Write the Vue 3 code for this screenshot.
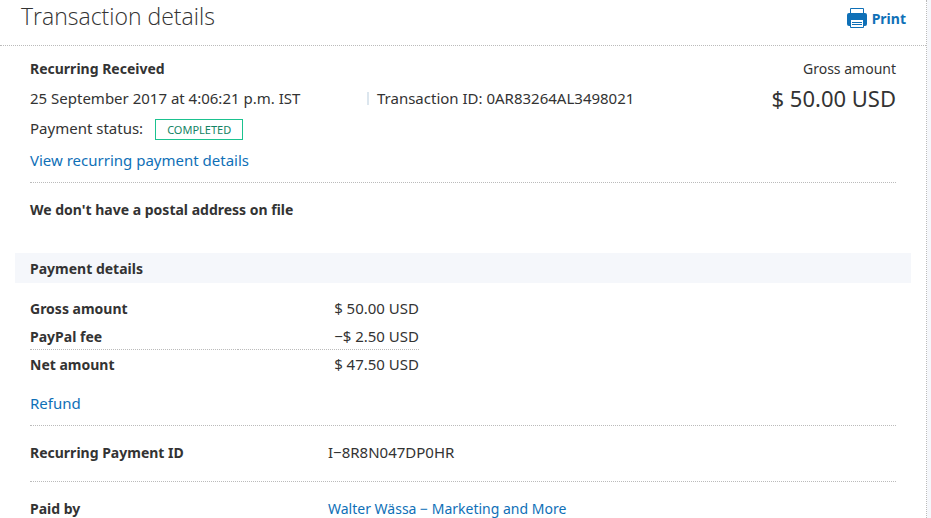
<script setup>
const amounts = [
  { label: 'Gross amount', value: '$ 50.00 USD' },
  { label: 'PayPal fee', value: '−$ 2.50 USD', last: true },
  { label: 'Net amount', value: '$ 47.50 USD', total: true },
]
</script>

<template>
  <div class="page">
    <main class="panel">
      <header class="header">
        <h1>Transaction details</h1>
        <button type="button" class="print">
          <svg viewBox="0 0 20 20" width="20" height="20" aria-hidden="true">
            <path d="M3.500 6V.5h13V6" fill="#fff" stroke="#0f70b7" stroke-linejoin="round" />
            <path d="M2 5h16q2 0 2 2v9q0 2-2 2h-1v-6H3v6H2q-2 0-2-2V7q0-2 2-2z" fill="#0f70b7" />
            <path d="M3.500 12v7.500h13V12" fill="#fff" stroke="#0f70b7" stroke-linejoin="round" />
            <path d="M5 14.500h10M5 16.500h10" stroke="#0f70b7" />
          </svg>
          <span>Print</span>
        </button>
      </header>

      <section class="summary">
        <div class="facts">
          <h2>Recurring Received</h2>
          <div class="when">
            <span class="date">25 September 2017 at 4:06:21 p.m. IST</span>
            <span class="txn">Transaction ID: 0AR83264AL3498021</span>
          </div>
          <div class="status">
            <span class="status-label">Payment status:</span>
            <span class="badge">COMPLETED</span>
          </div>
          <a href="#recurring" class="more">View recurring payment details</a>
        </div>
        <div class="gross">
          <span>Gross amount</span>
          <strong>$ 50.00 USD</strong>
        </div>
      </section>

      <p class="postal">We don't have a postal address on file</p>

      <h2 class="band">Payment details</h2>

      <section class="payment">
        <table>
          <tbody>
            <tr v-for="row in amounts" :key="row.label" :class="{ last: row.last, total: row.total }">
              <th scope="row">{{ row.label }}</th>
              <td>{{ row.value }}</td>
            </tr>
          </tbody>
        </table>
        <a href="#refund" class="refund">Refund</a>
      </section>

      <dl class="details">
        <div class="detail">
          <dt>Recurring Payment ID</dt>
          <dd>I−8R8N047DP0HR</dd>
        </div>
        <div class="detail">
          <dt>Paid by</dt>
          <dd><a href="#payer" class="payer">Walter Wässa − Marketing and More</a></dd>
        </div>
      </dl>
    </main>
  </div>
</template>

<style>
body {
  background: #f5f7fb;
}
</style>

<style scoped>
.page {
  padding-right: 4px;
  color: #333;
  font: 15px/16px "Noto Sans", "Open Sans", sans-serif;
}
.panel {
  background: #fff;
  border-right: 1px dotted #bbb;
}
h1, h2, p, dl, dd {
  margin: 0;
}
h2, th, dt, .postal {
  font-size: 14px;
  font-weight: 700;
  line-height: 18px;
}
a {
  color: #0f70b7;
  text-decoration: none;
}
.header {
  display: flex;
  align-items: flex-start;
  justify-content: space-between;
  height: 45px;
  padding: 0 20px 0 21px;
  border-bottom: 1px dotted #bbb;
}
h1 {
  font: 300 23px/32px "Open Sans", "Noto Sans", sans-serif;
}
.print {
  display: flex;
  align-items: center;
  gap: 5px;
  margin-top: 8px;
  padding: 0;
  border: 0;
  background: none;
  color: #0f70b7;
  font: 700 14px/18px "Noto Sans", "Open Sans", sans-serif;
}
.print span {
  padding-top: 2px;
}
.summary {
  display: flex;
  justify-content: space-between;
  margin: 0 30px;
  padding: 14px 0 12px;
  border-bottom: 1px dotted #bbb;
}
.facts {
  display: flex;
  flex-direction: column;
  align-items: flex-start;
  gap: 12px;
}
.when {
  display: flex;
}
.when, .status-label, .more, .refund {
  padding-bottom: 2px;
}
.date {
  width: 337px;
}
.txn {
  display: flex;
  align-items: center;
}
.txn::before {
  content: "";
  height: 13px;
  margin-right: 8px;
  border-left: 2px solid #dce6ee;
}
.status {
  display: flex;
  align-items: center;
  gap: 12px;
  height: 18px;
}
.badge {
  padding: 0 11px;
  border: 1px solid #1bc28f;
  color: #138364;
  font-size: 11px;
  line-height: 19px;
}
.more {
  margin-top: 2px;
}
.gross {
  display: flex;
  flex-direction: column;
  gap: 6px;
  font-size: 14px;
  line-height: 18px;
  text-align: right;
}
.gross strong {
  font-size: 22px;
  font-weight: 400;
  line-height: 28px;
}
.postal {
  padding: 18px 30px 34px;
}
.band {
  margin: 0 15px;
  padding: 7px 15px 5px;
  background: #f5f7fb;
}
.payment {
  margin: 0 30px;
  padding: 12px 0;
}
table {
  width: 389px;
  margin-bottom: 16px;
  border-spacing: 0;
}
th, td {
  padding: 5px 0;
  text-align: left;
  vertical-align: top;
}
td {
  text-align: right;
}
.last > * {
  padding-bottom: 3px;
  border-bottom: 1px dotted #bbb;
}
.total > * {
  padding-top: 6px;
}
.refund {
  display: inline-block;
}
.details {
  margin: 0 30px;
}
.detail {
  display: flex;
  padding: 18px 0 19px;
  border-top: 1px dotted #bbb;
}
.detail:last-child {
  padding-bottom: 0;
}
dt {
  width: 298px;
}
.payer {
  font-size: 14px;
}
</style>
